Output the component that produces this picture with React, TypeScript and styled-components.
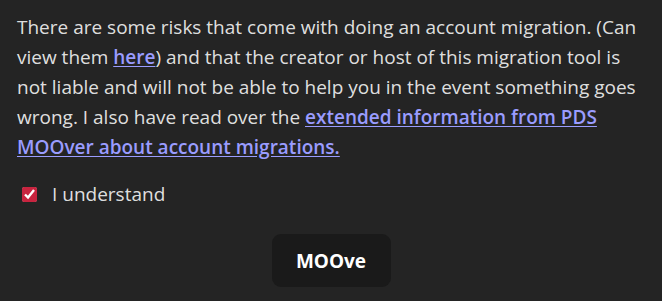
import styled, { createGlobalStyle } from "styled-components";

const GlobalStyle = createGlobalStyle`
  html, body {
    margin: 0;
    padding: 0;
    background: #242424;
  }
  body {
    font-family: "Open Sans", "Noto Sans", sans-serif;
    color: rgba(255, 255, 255, 0.87);
    -webkit-font-smoothing: antialiased;
  }
`;

export default function App() {
  return (
    <>
      <GlobalStyle />
      <Container>
        <Notice>
          There are some risks that come with doing an account migration. (Can
          view them <Link href="#">here</Link>) and that the creator or host of
          this migration tool is not liable and will not be able to help you in
          the event something goes wrong. I also have read over the{" "}
          <Link href="#">
            extended information from PDS MOOver about account migrations.
          </Link>
        </Notice>

        <CheckRow>
          <Checkbox type="checkbox" defaultChecked />
          <CheckLabel>I understand</CheckLabel>
        </CheckRow>

        <Actions>
          <Button type="button">MOOve</Button>
        </Actions>
      </Container>
    </>
  );
}

const Container = styled.div`
  padding: 12px 17px 0 17px;
  display: flex;
  flex-direction: column;
`;

const Notice = styled.p`
  margin: 0;
  font-size: 19px;
  line-height: 30px;
`;

const Link = styled.a`
  color: #9a9cff;
  font-weight: 600;
  text-decoration: underline;
  text-underline-offset: 2px;
`;

const CheckRow = styled.label`
  display: flex;
  align-items: center;
  gap: 15px;
  margin-top: 20px;
  padding-left: 5px;
`;

const Checkbox = styled.input`
  margin: 0;
  width: 15px;
  height: 15px;
  accent-color: #c8243f;
`;

const CheckLabel = styled.span`
  font-size: 19px;
  line-height: 24px;
`;

const Actions = styled.div`
  display: flex;
  justify-content: center;
  margin-top: 28px;
`;

const Button = styled.button`
  width: 119px;
  height: 53px;
  border: 1px solid transparent;
  border-radius: 9px;
  background: #1a1a1a;
  color: #ffffff;
  font-family: inherit;
  font-size: 19px;
  font-weight: 700;
  cursor: pointer;
`;
